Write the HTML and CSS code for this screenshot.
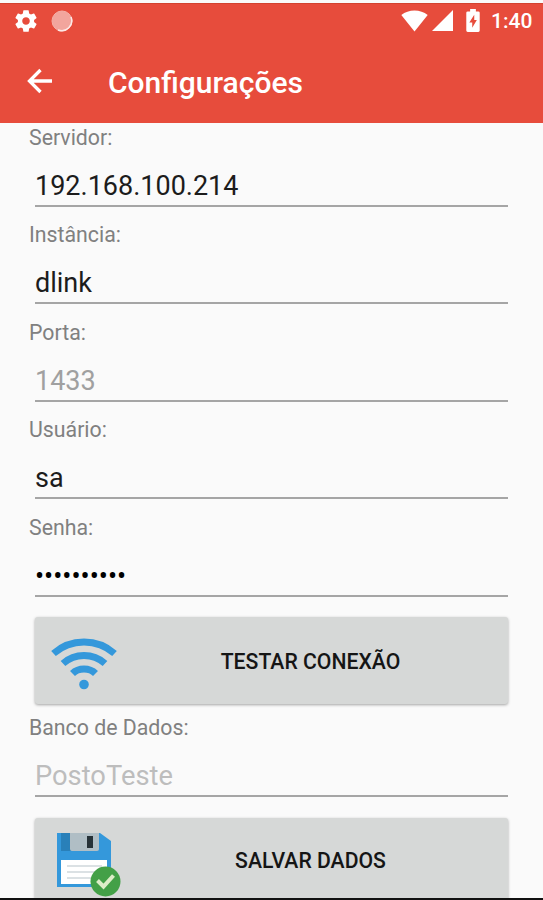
FILE: index.html
```
<!DOCTYPE html>
<html lang="pt-BR">
<head>
    <meta charset="UTF-8">
    <meta name="viewport" content="width=device-width, initial-scale=1.0">
    <title>Configurações</title>
    <link rel="stylesheet" href="styles.css">
</head>
<body>
    <div class="screen">
        <div class="status-bar">
            <svg class="gear" width="26" height="26" viewBox="0 0 24 24">
                <path fill="#fff" d="M19.43 12.98c.04-.32.07-.64.07-.98s-.03-.66-.07-.98l2.11-1.65c.19-.15.24-.42.12-.64l-2-3.46c-.12-.22-.39-.3-.61-.22l-2.49 1c-.52-.4-1.08-.73-1.69-.98l-.38-2.65C14.46 2.18 14.25 2 14 2h-4c-.25 0-.46.18-.49.42l-.38 2.65c-.61.25-1.17.59-1.69.98l-2.49-1c-.23-.09-.49 0-.61.22l-2 3.46c-.13.22-.07.49.12.64l2.11 1.65c-.04.32-.07.65-.07.98s.03.66.07.98l-2.11 1.65c-.19.15-.24.42-.12.64l2 3.46c.12.22.39.3.61.22l2.49-1c.52.4 1.08.73 1.69.98l.38 2.65c.03.24.24.42.49.42h4c.25 0 .46-.18.49-.42l.38-2.65c.61-.25 1.17-.59 1.69-.98l2.49 1c.23.09.49 0 .61-.22l2-3.46c.12-.22.07-.49-.12-.64l-2.11-1.65zM12 15.5c-1.93 0-3.5-1.57-3.5-3.5s1.57-3.5 3.5-3.5 3.5 1.57 3.5 3.5-1.57 3.5-3.5 3.5z"/>
            </svg>
            <svg class="sync" width="22" height="22" viewBox="0 0 22 22">
                <circle cx="11" cy="11" r="10" fill="#f2a59d" stroke="#f4b0a8" stroke-width="1"/>
                <path d="M20 7a10 10 0 0 1-13 13" fill="none" stroke="#fde9e6" stroke-width="1.500"/>
            </svg>
            <div class="status-right">
                <svg class="wifi-status" width="27" height="22" viewBox="0 0 27 22">
                    <path fill="#fff" d="M13.5 21.5 0.3 5C4 2 8.500.5 13.5.5S23 2 26.700 5z"/>
                </svg>
                <svg class="signal" width="21" height="21" viewBox="0 0 21 21">
                    <path fill="#fff" d="M0 21 21 0V21z"/>
                </svg>
                <svg class="battery" width="14" height="23" viewBox="0 0 14 24">
                    <path fill="#fff" d="M4 0h6v2.500h2.500Q14 2.500 14 4v18.500q0 1.500-1.500 1.500h-11Q0 24 0 22.500V4q0-1.500 1.500-1.500H4z"/>
                    <path fill="#e74c3c" d="M8.300 6 3.200 14h3v5.500L11 11.500H8.300z"/>
                </svg>
                <span class="clock">1:40</span>
            </div>
        </div>

        <div class="app-bar">
            <svg class="back" width="26" height="26" viewBox="0 0 26 26">
                <path d="M25 13H3M13.500 2 2.500 13l11 11" fill="none" stroke="#fff" stroke-width="3.300"/>
            </svg>
            <h1 class="title">Configurações</h1>
        </div>

        <div class="form">
            <div class="field">
                <div class="label">Servidor:</div>
                <div class="input">192.168.100.214</div>
            </div>
            <div class="field">
                <div class="label">Instância:</div>
                <div class="input">dlink</div>
            </div>
            <div class="field">
                <div class="label">Porta:</div>
                <div class="input disabled">1433</div>
            </div>
            <div class="field">
                <div class="label">Usuário:</div>
                <div class="input">sa</div>
            </div>
            <div class="field">
                <div class="label">Senha:</div>
                <div class="input password">••••••••••</div>
            </div>

            <div class="button test">
                <svg class="button-icon wifi" width="66" height="52" viewBox="0 0 66 52">
                    <g fill="none" stroke="#3498db" stroke-width="7">
                        <path d="M2.500 15.500Q15.500 4 33 4t30.500 11.500"/>
                        <path d="M12 25.500Q21 17.500 33 17.500t21 8"/>
                        <path d="M21.500 35.500Q26 31 33 31t11.500 4.500"/>
                    </g>
                    <circle cx="33" cy="46.500" r="4.800" fill="#3498db"/>
                </svg>
                <span class="button-text">TESTAR CONEXÃO</span>
            </div>

            <div class="field">
                <div class="label">Banco de Dados:</div>
                <div class="input hint">PostoTeste</div>
            </div>

            <div class="button save">
                <svg class="button-icon floppy" width="70" height="66" viewBox="0 0 70 66">
                    <path fill="#3498db" d="M6 1h43l11 8v46H6z"/>
                    <path fill="#2980b9" d="M10 1h10v18H10z"/>
                    <path fill="#b0bec5" d="M19 1h29v16q0 2-2 2H21q-2 0-2-2z"/>
                    <path fill="#263238" d="M36 4h6v12h-6z"/>
                    <path fill="#fff" d="M10 28h46v24H10z"/>
                    <path d="M16 34h35M16 40h35M16 46h35" stroke="#cfd8dc" stroke-width="1.500"/>
                    <circle cx="54.500" cy="49.500" r="15" fill="#43a047"/>
                    <path d="m46.500 48.500 6 6 10-11" fill="none" stroke="#dcedc8" stroke-width="4"/>
                </svg>
                <span class="button-text">SALVAR DADOS</span>
            </div>
        </div>
    </div>
</body>
</html>
```
FILE: styles.css
```
* {
    box-sizing: border-box;
}

body {
    margin: 0;
    background-color: #fafafa;
    font-family: Roboto, sans-serif;
}

.screen {
    display: flex;
    flex-direction: column;
    height: 900px;
    overflow: hidden;
    border-top: 3px solid #fafafa;
    border-bottom: 2px solid #111;
}

/* Barra de status */
.status-bar {
    display: flex;
    flex-shrink: 0;
    align-items: center;
    height: 36px;
    padding: 0 10px 2px 13px;
    background-color: #e74c3c;
    border-top: 1px solid #d3422f;
}

.sync {
    margin-left: 12px;
}

.status-right {
    display: flex;
    align-items: center;
    margin-left: auto;
}

.signal {
    margin-left: 4px;
}

.battery {
    margin-left: 13px;
}

.clock {
    width: 42px;
    margin-left: 11px;
    color: #fff;
    font-size: 21px;
    font-weight: 500;
    white-space: nowrap;
}

/* Barra do aplicativo */
.app-bar {
    display: flex;
    flex-shrink: 0;
    align-items: center;
    height: 84px;
    padding-left: 27px;
    background-color: #e74c3c;
}

.title {
    margin: 2px 0 0 55px;
    color: #fff;
    font-size: 30px;
    font-weight: 500;
}

/* Formulário */
.form {
    flex: 1;
    min-height: 0;
    overflow: hidden;
    padding: 0 35px 0 29px;
}

.field {
    height: 97.4px;
}

.label {
    height: 28px;
    color: #808080;
    font-size: 21.3px;
    line-height: 30px;
}

.input {
    height: 56px;
    margin-left: 6px;
    border-bottom: 2px solid #a5a5a5;
    color: #1c1c1c;
    font-size: 27px;
    line-height: 71px;
}

.disabled {
    color: #a0a0a0;
}

.hint {
    color: #bdbdbd;
    font-size: 27.3px;
}

.password {
    color: #000;
}

/* Botões */
.button {
    display: flex;
    align-items: center;
    height: 87px;
    margin-left: 6px;
    padding-left: 16px;
    border-radius: 3px;
    background-color: #d6d8d7;
    box-shadow: 0 1px 3px rgba(0, 0, 0, 0.35);
}

.test {
    margin-top: 7px;
    margin-bottom: 9px;
}

.save {
    margin-top: 8px;
    padding-bottom: 2px;
}

.button-icon {
    flex-shrink: 0;
}

.wifi {
    margin-top: 8px;
}

.floppy {
    margin: 8px -4px 0 0;
}

.button-text {
    flex: 1;
    padding-right: 4px;
    color: #151515;
    font-size: 21.2px;
    font-weight: 500;
    text-align: center;
}

.test .button-text {
    padding-top: 2px;
}
```
